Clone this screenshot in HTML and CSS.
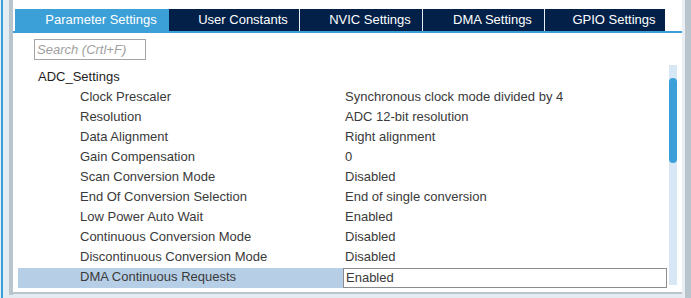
FILE: index.html
```html
<!DOCTYPE html>
<html lang="en">
<head>
    <meta charset="UTF-8">
    <title>ADC Configuration</title>
    <link rel="stylesheet" href="styles.css">
</head>
<body>

    <div class="frame">
        <div class="edge"></div>
        <div class="edge-bar"></div>

        <div class="panel">
            <div class="tabs">
                <div class="tab active">Parameter Settings</div>
                <div class="tab user">User Constants</div>
                <div class="tab nvic">NVIC Settings</div>
                <div class="tab dma">DMA Settings</div>
                <div class="tab last">GPIO Settings</div>
            </div>

            <div class="content">
                <div class="list">
                    <div class="search">Search (Crtl+F)</div>

                    <div class="group">ADC_Settings</div>
                    <div class="row"><span class="label">Clock Prescaler</span><span class="value">Synchronous clock mode divided by 4</span></div>
                    <div class="row"><span class="label">Resolution</span><span class="value">ADC 12-bit resolution</span></div>
                    <div class="row"><span class="label">Data Alignment</span><span class="value">Right alignment</span></div>
                    <div class="row"><span class="label">Gain Compensation</span><span class="value">0</span></div>
                    <div class="row"><span class="label">Scan Conversion Mode</span><span class="value">Disabled</span></div>
                    <div class="row"><span class="label">End Of Conversion Selection</span><span class="value">End of single conversion</span></div>
                    <div class="row"><span class="label">Low Power Auto Wait</span><span class="value">Enabled</span></div>
                    <div class="row"><span class="label">Continuous Conversion Mode</span><span class="value">Disabled</span></div>
                    <div class="row"><span class="label">Discontinuous Conversion Mode</span><span class="value">Disabled</span></div>
                    <div class="row selected"><span class="label">DMA Continuous Requests</span><span class="value">Enabled</span></div>
                </div>

                <div class="scrollbar">
                    <div class="thumb"></div>
                </div>
            </div>
        </div>

        <div class="side"></div>
    </div>

</body>
</html>
```

FILE: styles.css
```css
body {
    margin: 0;
    font-family: "Liberation Sans", Arial, sans-serif;
    font-size: 13px;
    background-color: #e4ebf1;
}
.frame {
    display: flex;
    width: 691px;
    height: 298px;
    overflow: hidden;
}
.edge {
    width: 5px;
    background: linear-gradient(to right, #e3edf5 1px, #3ca0d8 1px, #3ca0d8 3px, #e3edf5 3px);
}
.edge-bar {
    width: 4px;
    margin-left: 4px;
    height: 295px;
    background-color: #b9c5cd;
}
.panel {
    width: 669px;
    height: 292px;
    background: white;
    border-bottom: 2px solid #b9c5cd;
    display: flex;
    flex-direction: column;
}
.tabs {
    display: flex;
    margin-top: 9px;
    padding-left: 2px;
    height: 22px;
    border-bottom: 2px solid #3ca0d8;
}
.tab {
    box-sizing: border-box;
    padding-left: 18px;
    text-align: center;
    line-height: 22px;
    color: white;
    background-color: #022048;
    border-right: 1px solid #e8eef4;
}
.tab.active {
    width: 154px;
    background-color: #3ca0d8;
    border-right: none;
}
.tab.user {
    width: 131px;
}
.tab.nvic {
    width: 123px;
}
.tab.dma {
    width: 122px;
}
.tab.last {
    width: 120px;
    border-right: none;
}
.content {
    display: flex;
    padding-left: 5px;
}
.list {
    width: 649px;
}
.search {
    box-sizing: border-box;
    width: 112px;
    height: 21px;
    margin: 6px 0 7px 16px;
    padding-left: 2px;
    border: 1px solid #a4a4a4;
    color: #a0a0a0;
    font-style: italic;
    line-height: 19px;
}
.group {
    height: 20px;
    line-height: 20px;
    padding-left: 20px;
    color: #1e1e1e;
}
.row {
    display: grid;
    grid-template-columns: 325px 1fr;
    height: 20px;
    line-height: 20px;
    color: #3a3a3a;
}
.label {
    padding-left: 62px;
}
.value {
    padding-left: 2px;
}
.row.selected {
    margin-top: 1px;
    height: 19px;
    line-height: 18px;
}
.row.selected .label {
    background-color: #b7cfe6;
}
.row.selected .value {
    border: 1px solid #8c8c8c;
    padding-left: 2px;
}
.scrollbar {
    width: 8px;
    height: 220px;
    margin: 32px 0 0 2px;
    background-color: #d7e7f5;
    display: flex;
    flex-direction: column;
}
.thumb {
    margin-top: 13px;
    height: 85px;
    border-radius: 4px;
    background-color: #3ca0d8;
}
.side {
    flex: 1;
    background: linear-gradient(to right, #e8eef3 3px, #b9c5cd 3px);
}
```
